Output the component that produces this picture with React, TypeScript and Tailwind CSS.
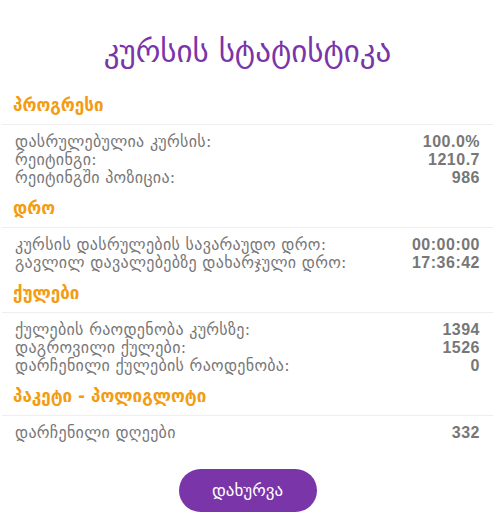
import React from "react";

interface Row {
  label: string;
  value: string;
}

interface Section {
  title: string;
  rows: Row[];
}

const sections: Section[] = [
  {
    title: "პროგრესი",
    rows: [
      { label: "დასრულებულია კურსის:", value: "100.0%" },
      { label: "რეიტინგი:", value: "1210.7" },
      { label: "რეიტინგში პოზიცია:", value: "986" },
    ],
  },
  {
    title: "დრო",
    rows: [
      { label: "კურსის დასრულების სავარაუდო დრო:", value: "00:00:00" },
      { label: "გავლილ დავალებებზე დახარჯული დრო:", value: "17:36:42" },
    ],
  },
  {
    title: "ქულები",
    rows: [
      { label: "ქულების რაოდენობა კურსზე:", value: "1394" },
      { label: "დაგროვილი ქულები:", value: "1526" },
      { label: "დარჩენილი ქულების რაოდენობა:", value: "0" },
    ],
  },
  {
    title: "პაკეტი - პოლიგლოტი",
    rows: [{ label: "დარჩენილი დღეები", value: "332" }],
  },
];

const geo = { fontFamily: '"DejaVu Sans", sans-serif' };

export default function App() {
  return (
    <div
      className="w-[504px] h-[520px] bg-white overflow-hidden"
      style={{ fontFamily: '"Liberation Sans", "DejaVu Sans", sans-serif' }}
    >
      <div className="w-[491px] ml-[2px]">
        <h1 style={geo} className="text-center text-[31px] leading-[31px] text-[#7a35a9] pt-[36px] pb-[28px]">
          კურსის სტატისტიკა
        </h1>

        {sections.map((section, i) => (
          <div key={i} className="mb-[11px]">
            <h2 style={geo} className="px-[11px] text-[17px] leading-[20px] font-bold text-[#f39c12] pb-[9px]">
              {section.title}
            </h2>
            <div className="border-t border-[#eeeeee] pt-[8px] px-[13px]">
              {section.rows.map((row, j) => (
                <div key={j} className="flex justify-between items-center h-[18px] text-[#777777]">
                  <span style={geo} className="text-[16px] tracking-[0.3px]">{row.label}</span>
                  <span className="font-bold text-[16px] tracking-[0.5px]">{row.value}</span>
                </div>
              ))}
            </div>
          </div>
        ))}

        <div className="flex justify-center pt-[16px]">
          <button style={geo} className="w-[138px] h-[43px] rounded-full bg-[#7a35a9] text-white text-[17px]">
            დახურვა
          </button>
        </div>
      </div>
    </div>
  );
}
